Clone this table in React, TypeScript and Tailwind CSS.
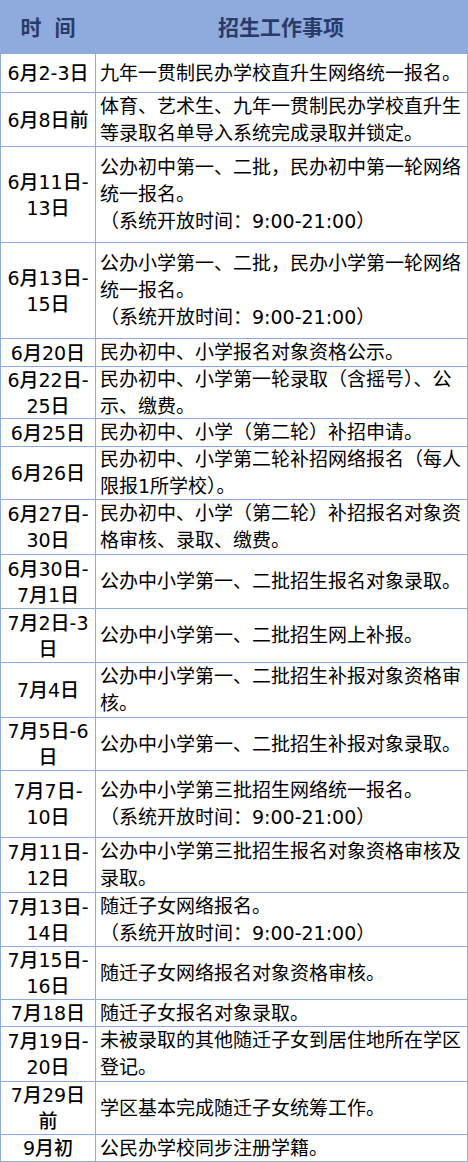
import React from 'react'

type Row = {
  date: string[]
  text: string[]
  h: string
}

const rows: Row[] = [
  { date: ['6月2-3日'], text: ['九年一贯制民办学校直升生网络统一报名。'], h: 'h-[39px]' },
  {
    date: ['6月8日前'],
    text: ['体育、艺术生、九年一贯制民办学校直升生', '等录取名单导入系统完成录取并锁定。'],
    h: 'h-[54px]',
  },
  {
    date: ['6月11日-', '13日'],
    text: ['公办初中第一、二批，民办初中第一轮网络', '统一报名。', '（系统开放时间：9:00-21:00）'],
    h: 'h-[96px]',
  },
  {
    date: ['6月13日-', '15日'],
    text: ['公办小学第一、二批，民办小学第一轮网络', '统一报名。', '（系统开放时间：9:00-21:00）'],
    h: 'h-[96px]',
  },
  { date: ['6月20日'], text: ['民办初中、小学报名对象资格公示。'], h: 'h-[28px]' },
  {
    date: ['6月22日-', '25日'],
    text: ['民办初中、小学第一轮录取（含摇号）、公', '示、缴费。'],
    h: 'h-[52px]',
  },
  { date: ['6月25日'], text: ['民办初中、小学（第二轮）补招申请。'], h: 'h-[28px]' },
  {
    date: ['6月26日'],
    text: ['民办初中、小学第二轮补招网络报名（每人', '限报1所学校）。'],
    h: 'h-[53px]',
  },
  {
    date: ['6月27日-', '30日'],
    text: ['民办初中、小学（第二轮）补招报名对象资', '格审核、录取、缴费。'],
    h: 'h-[55px]',
  },
  { date: ['6月30日-', '7月1日'], text: ['公办中小学第一、二批招生报名对象录取。'], h: 'h-[54px]' },
  { date: ['7月2日-3', '日'], text: ['公办中小学第一、二批招生网上补报。'], h: 'h-[54px]' },
  {
    date: ['7月4日'],
    text: ['公办中小学第一、二批招生补报对象资格审', '核。'],
    h: 'h-[55px]',
  },
  { date: ['7月5日-6', '日'], text: ['公办中小学第一、二批招生补报对象录取。'], h: 'h-[53px]' },
  {
    date: ['7月7日-', '10日'],
    text: ['公办中小学第三批招生网络统一报名。', '（系统开放时间：9:00-21:00）'],
    h: 'h-[67px]',
  },
  {
    date: ['7月11日-', '12日'],
    text: ['公办中小学第三批招生报名对象资格审核及', '录取。'],
    h: 'h-[55px]',
  },
  {
    date: ['7月13日-', '14日'],
    text: ['随迁子女网络报名。', '（系统开放时间：9:00-21:00）'],
    h: 'h-[54px]',
  },
  { date: ['7月15日-', '16日'], text: ['随迁子女网络报名对象资格审核。'], h: 'h-[53px]' },
  { date: ['7月18日'], text: ['随迁子女报名对象录取。'], h: 'h-[27px]' },
  {
    date: ['7月19日-', '20日'],
    text: ['未被录取的其他随迁子女到居住地所在学区', '登记。'],
    h: 'h-[55px]',
  },
  { date: ['7月29日', '前'], text: ['学区基本完成随迁子女统筹工作。'], h: 'h-[53px]' },
  { date: ['9月初'], text: ['公民办学校同步注册学籍。'], h: 'h-[27px]' },
]

export default function App() {
  return (
    <div className="w-[468px] bg-white font-['DejaVu_Sans','Noto_Sans_CJK_SC',sans-serif] text-black">
      <div className="border-x border-b border-[#8faadc]">
        {/* header */}
        <div className="flex h-[53px] items-center bg-[#8faadc] text-[21px] font-bold text-[#2a3b6a]">
          <div className="flex w-[94px] justify-center gap-[13px] font-['Noto_Sans_CJK_SC',sans-serif]">
            <span>时</span>
            <span>间</span>
          </div>
          <div className="flex-1 text-center font-['Noto_Sans_CJK_SC',sans-serif]">招生工作事项</div>
        </div>
        {rows.map((r, i) => (
          <div key={i} className={`flex border-t border-[#8faadc] ${r.h}`}>
            <div className="flex w-[95px] shrink-0 flex-col items-center justify-center border-r border-[#8faadc] text-[19px] leading-[26px] font-medium">
              {r.date.map((d, j) => (
                <div key={j} className="whitespace-nowrap">
                  {d}
                </div>
              ))}
            </div>
            <div className="flex flex-1 flex-col justify-center pl-[4px] text-[19px] leading-[27px]">
              {r.text.map((t, j) => (
                <div key={j} className="whitespace-nowrap">
                  {t}
                </div>
              ))}
            </div>
          </div>
        ))}
      </div>
    </div>
  )
}
